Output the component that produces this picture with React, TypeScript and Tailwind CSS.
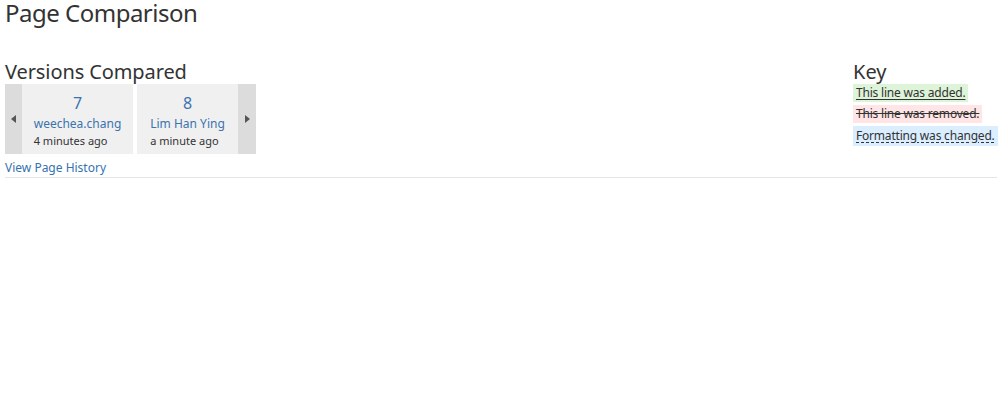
import React from "react";

export default function App() {
  const font = { fontFamily: '"Segoe UI", "Noto Sans", "Open Sans", sans-serif' };
  return (
    <div className="w-[999px] h-[408px] bg-white text-[#333] pl-[5px] pr-[2px]" style={font}>
      <h1 className="text-[24px] leading-[28px] mt-[-1px] font-normal tracking-[-0.5px]">Page Comparison</h1>
      <div className="flex justify-between mt-[33px] border-b border-[#e5e5e5] pb-[1px]">
        <div>
          <h2 className="text-[20px] leading-[24px] tracking-[-0.1px]">Versions Compared</h2>
          <div className="flex h-[70px] mt-[-1px] translate-y-[1px]">
            <div className="w-[17px] bg-[#dcdcdc] flex items-center justify-center">
              <svg width="5" height="8" viewBox="0 0 5 8"><path d="M5 0 L0 4 L5 8 Z" fill="#555" /></svg>
            </div>
            <div className="bg-[#f0f0f0] w-[111px] flex flex-col items-center pt-[9px]">
              <div className="text-[16px] leading-[20px] text-[#3b73af]">7</div>
              <div className="flex flex-col items-start mt-[3px]">
                <div className="text-[12px] leading-[16px] text-[#3b73af]">weechea.chang</div>
                <div className="text-[11px] leading-[17px] text-[#333]">4 minutes ago</div>
              </div>
            </div>
            <div className="w-[4px] bg-white" />
            <div className="bg-[#f0f0f0] w-[101px] flex flex-col items-center pt-[9px]">
              <div className="text-[16px] leading-[20px] text-[#3b73af]">8</div>
              <div className="flex flex-col items-start mt-[3px]">
                <div className="text-[12px] leading-[16px] text-[#3b73af]">Lim Han Ying</div>
                <div className="text-[11px] leading-[17px] text-[#333]">a minute ago</div>
              </div>
            </div>
            <div className="w-[18px] bg-[#dcdcdc] flex items-center justify-center">
              <svg width="5" height="8" viewBox="0 0 5 8"><path d="M0 0 L5 4 L0 8 Z" fill="#555" /></svg>
            </div>
          </div>
          <a className="block text-[12px] leading-[16px] text-[#3572b0] mt-[7px]">View Page History</a>
        </div>
        <div className="w-[144px] text-[12px]">
          <h2 className="text-[20px] leading-[24px]">Key</h2>
          <div className="flex flex-col items-start gap-[3px] whitespace-nowrap tracking-[-0.2px]">
            <span className="bg-[#ddf4d8] px-[3px] leading-[18px] underline decoration-[#333] underline-offset-2">This line was added.</span>
            <span className="bg-[#ffe5e5] px-[3px] leading-[18px] line-through">This line was removed.</span>
            <span className="bg-[#dbeeff] px-[3px] leading-[20px] underline decoration-dashed underline-offset-2">Formatting was changed.</span>
          </div>
        </div>
      </div>
    </div>
  );
}
